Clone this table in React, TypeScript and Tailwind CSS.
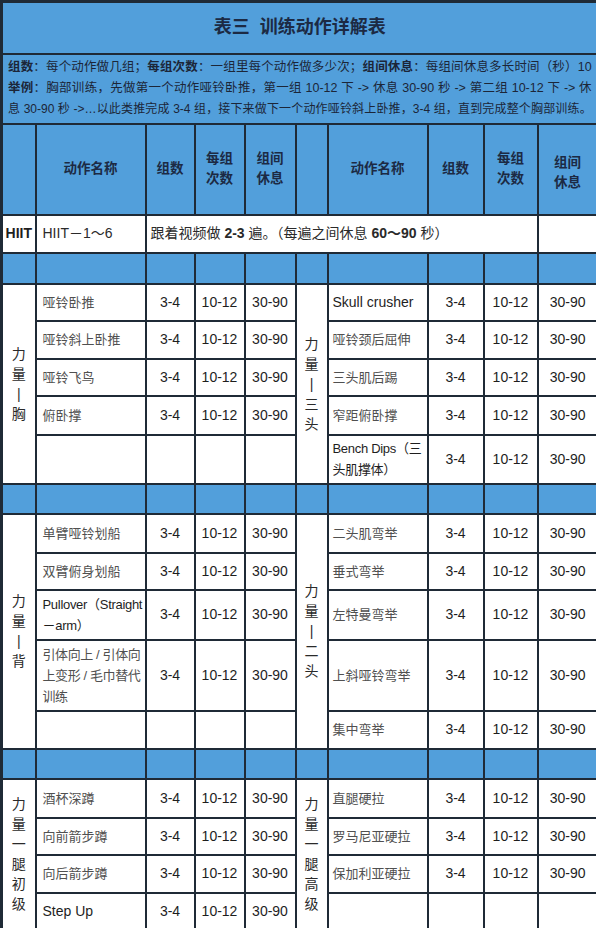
import React from "react";

const LINE = "border-2 border-[#1f2a36]";
const BLUE = "bg-[#529fdb]";

type Name = { lines: string[]; en?: boolean; small?: boolean } | null;

type Side = { label: string[]; names: Name[] };

type Section = { heights: number[]; left: Side; right: Side };

const cn = (s: string): Name => ({ lines: [s] });
const en = (...lines: string[]): Name => ({ lines, en: true, small: lines.length > 1 });

const sections: Section[] = [
  {
    heights: [37, 38, 37, 39, 49],
    left: {
      label: ["力", "量", "|", "胸"],
      names: [cn("哑铃卧推"), cn("哑铃斜上卧推"), cn("哑铃飞鸟"), cn("俯卧撑"), null],
    },
    right: {
      label: ["力", "量", "|", "三", "头"],
      names: [
        en("Skull crusher"),
        cn("哑铃颈后屈伸"),
        cn("三头肌后踢"),
        cn("窄距俯卧撑"),
        en("Bench Dips（三", "头肌撑体）"),
      ],
    },
  },
  {
    heights: [39, 37, 50, 71, 38],
    left: {
      label: ["力", "量", "|", "背"],
      names: [
        cn("单臂哑铃划船"),
        cn("双臂俯身划船"),
        en("Pullover（Straight", "－arm）"),
        { lines: ["引体向上 / 引体向", "上变形 / 毛巾替代", "训练"], small: true },
        null,
      ],
    },
    right: {
      label: ["力", "量", "|", "二", "头"],
      names: [cn("二头肌弯举"), cn("垂式弯举"), cn("左特曼弯举"), cn("上斜哑铃弯举"), cn("集中弯举")],
    },
  },
  {
    heights: [39, 37, 38, 37],
    left: {
      label: ["力", "量", "一", "腿", "初", "级"],
      names: [cn("酒杯深蹲"), cn("向前箭步蹲"), cn("向后箭步蹲"), en("Step Up")],
    },
    right: {
      label: ["力", "量", "一", "腿", "高", "级"],
      names: [cn("直腿硬拉"), cn("罗马尼亚硬拉"), cn("保加利亚硬拉"), null],
    },
  },
];

function Label({ chars }: { chars: string[] }) {
  return (
    <div className="flex flex-col items-center text-[14px] leading-[20px] text-[#2a2a2a]">
      {chars.map((c, i) => (
        <span key={i}>{c}</span>
      ))}
    </div>
  );
}

function NameCell({ name, pad }: { name: Name; pad: string }) {
  let style = name?.small
    ? "text-[13px] tracking-[-0.4px] text-[#505050]"
    : "text-[13px] text-[#505050]";
  if (name?.en)
    style = name.small
      ? "text-[13px] tracking-[-0.3px] text-[#1e1e1e]"
      : "text-[14px] text-[#1e1e1e]";
  return (
    <td className={`${LINE} ${pad} align-middle`}>
      {name && (
        <div className={`whitespace-nowrap leading-[21px] ${style}`}>
          {name.lines.map((l, i) => (
            <div key={i}>{l}</div>
          ))}
        </div>
      )}
    </td>
  );
}

function Nums({ show }: { show: boolean }) {
  return (
    <>
      {["3-4", "10-12", "30-90"].map((v) => (
        <td key={v} className={`${LINE} text-center align-middle text-[14px] text-[#1e1e1e]`}>
          {show ? v : ""}
        </td>
      ))}
    </>
  );
}

function BlueRow({ h }: { h: string }) {
  return (
    <tr className={h}>
      {Array.from({ length: 10 }).map((_, i) => (
        <td key={i} className={`${LINE} ${BLUE} ${i === 0 ? "border-l-[3px]" : ""}`} />
      ))}
    </tr>
  );
}

const rowH: Record<number, string> = {
  37: "h-[37px]",
  38: "h-[38px]",
  39: "h-[39px]",
  49: "h-[49px]",
  50: "h-[50px]",
  71: "h-[71px]",
};

export default function App() {
  return (
    <div className="w-[596px] h-[928px] overflow-hidden bg-white font-['Liberation_Sans','Noto_Sans_CJK_SC',sans-serif]">
      <table className="w-[596px] table-fixed border-collapse">
        <colgroup>
          <col className="w-[34px]" />
          <col className="w-[110px]" />
          <col className="w-[49px]" />
          <col className="w-[50px]" />
          <col className="w-[51px]" />
          <col className="w-[32px]" />
          <col className="w-[100px]" />
          <col className="w-[56px]" />
          <col className="w-[54px]" />
          <col className="w-[60px]" />
        </colgroup>
        <tbody>
          <tr className="h-[52px]">
            <td
              colSpan={10}
              className={`${LINE} border-l-[3px] border-t-[3px] ${BLUE} text-center text-[18px] font-bold text-[#1c2a44]`}
            >
              表三&nbsp;&nbsp;训练动作详解表
            </td>
          </tr>
          <tr className="h-[70px]">
            <td
              colSpan={10}
              className={`${LINE} border-l-[3px] ${BLUE} px-[5px] text-[12.5px] leading-[21px] text-[#1c2638]`}
            >
              <div className="whitespace-nowrap [text-align-last:justify]">
                <b>组数</b>：每个动作做几组；<b>每组次数</b>：一组里每个动作做多少次；<b>组间休息</b>：每组间休息多长时间（秒）10
              </div>
              <div className="whitespace-nowrap [text-align-last:justify]">
                <b>举例</b>：胸部训练，先做第一个动作哑铃卧推，第一组 10-12 下 -&gt; 休息 30-90 秒 -&gt; 第二组 10-12 下 -&gt; 休
              </div>
              <div className="whitespace-nowrap text-[12px] [text-align-last:justify]">
                息 30-90 秒 -&gt;…以此类推完成 3-4 组，接下来做下一个动作哑铃斜上卧推，3-4 组，直到完成整个胸部训练。
              </div>
            </td>
          </tr>
          <tr className="h-[91px] text-[13.5px] font-bold leading-[20px] text-[#1c2a44]">
            <td className={`${LINE} border-l-[3px] ${BLUE}`} />
            <td className={`${LINE} ${BLUE} text-center`}>动作名称</td>
            <td className={`${LINE} ${BLUE} text-center`}>组数</td>
            <td className={`${LINE} ${BLUE} text-center`}>
              每组
              <br />
              次数
            </td>
            <td className={`${LINE} ${BLUE} text-center`}>
              组间
              <br />
              休息
            </td>
            <td className={`${LINE} ${BLUE}`} />
            <td className={`${LINE} ${BLUE} text-center`}>动作名称</td>
            <td className={`${LINE} ${BLUE} text-center`}>组数</td>
            <td className={`${LINE} ${BLUE} text-center`}>
              每组
              <br />
              次数
            </td>
            <td className={`${LINE} ${BLUE} pt-[8px] text-center`}>
              组间
              <br />
              休息
            </td>
          </tr>
          <tr className="h-[38px]">
            <td className={`${LINE} border-l-[3px] text-center text-[14px] font-bold text-[#1e1e1e]`}>HIIT</td>
            <td className={`${LINE} pl-[6px] text-[14px] text-[#2a2a2a]`}>HIIT－1～6</td>
            <td colSpan={7} className={`${LINE} pl-[4px] whitespace-nowrap text-[14px] text-[#2a2a2a]`}>
              跟着视频做 <b>2-3</b> 遍。（每遍之间休息 <b>60～90</b> 秒）
            </td>
            <td className={LINE} />
          </tr>
          <BlueRow h="h-[31px]" />
          {sections.map((s, si) => (
            <React.Fragment key={si}>
              {si > 0 && <BlueRow h="h-[30px]" />}
              {s.heights.map((h, i) => (
                <tr key={i} className={rowH[h]}>
                  {i === 0 && (
                    <td rowSpan={s.heights.length} className={`${LINE} border-l-[3px] align-middle`}>
                      <Label chars={s.left.label} />
                    </td>
                  )}
                  <NameCell name={s.left.names[i]} pad="pl-[6px]" />
                  <Nums show={!!s.left.names[i]} />
                  {i === 0 && (
                    <td rowSpan={s.heights.length} className={`${LINE} align-middle`}>
                      <Label chars={s.right.label} />
                    </td>
                  )}
                  <NameCell name={s.right.names[i]} pad="pl-[4px]" />
                  <Nums show={!!s.right.names[i]} />
                </tr>
              ))}
            </React.Fragment>
          ))}
        </tbody>
      </table>
    </div>
  );
}
